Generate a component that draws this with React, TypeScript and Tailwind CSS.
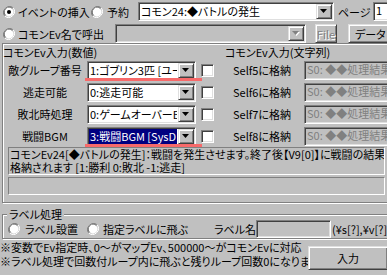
import React from "react";

const sunken =
  "border border-t-[#808080] border-l-[#808080] border-b-white border-r-white shadow-[inset_1px_1px_0_#404040,inset_-1px_-1px_0_#dfdfdf]";
const raised =
  "border border-t-[#dfdfdf] border-l-[#dfdfdf] border-b-[#404040] border-r-[#404040] shadow-[inset_1px_1px_0_#ffffff,inset_-1px_-1px_0_#808080]";
const thin = "border border-t-[#808080] border-l-[#808080] border-b-white border-r-white";

function Arrow({ off }: { off?: boolean }) {
  return (
    <div className={`flex h-full w-[16px] shrink-0 items-center justify-center bg-[#c0c0c0] ${raised}`}>
      <svg width="8" height="5" viewBox="0 0 8 5">
        {off && <polygon points="1,1 8,1 4.5,5" fill="#fff" />}
        <polygon points="0,0 7,0 3.5,4" fill={off ? "#808080" : "#000"} />
      </svg>
    </div>
  );
}

function Combo({
  text,
  className = "",
  off,
  sel,
}: {
  text?: string;
  className?: string;
  off?: boolean;
  sel?: boolean;
}) {
  return (
    <div className={`flex h-[19px] shrink-0 p-px ${sunken} ${off ? "bg-[#c0c0c0]" : "bg-white"} ${className}`}>
      <div
        className={`mr-px flex-1 overflow-hidden whitespace-nowrap pl-[1px] leading-[15px] ${
          sel ? "bg-[#000080] text-white" : ""
        }`}
      >
        {text}
      </div>
      <Arrow off={off} />
    </div>
  );
}

function Radio({ on, className = "" }: { on?: boolean; className?: string }) {
  return (
    <svg width="12" height="12" viewBox="0 0 12 12" className={`shrink-0 ${className}`}>
      <path d="M10.2 1.8A6 6 0 0 0 1.8 10.2" fill="none" stroke="#808080" strokeWidth="1" />
      <path d="M1.8 10.2A6 6 0 0 0 10.2 1.8" fill="none" stroke="#ffffff" strokeWidth="1" />
      <path d="M9.5 2.5A5 5 0 0 0 2.5 9.5" fill="none" stroke="#404040" strokeWidth="1" />
      <path d="M2.5 9.5A5 5 0 0 0 9.5 2.5" fill="none" stroke="#dfdfdf" strokeWidth="1" />
      <circle cx="6" cy="6" r="4.4" fill="#fff" />
      {on && <circle cx="6" cy="6" r="2" fill="#000" />}
    </svg>
  );
}

function Check({ className = "" }: { className?: string }) {
  return <div className={`h-[13px] w-[13px] shrink-0 bg-white ${sunken} ${className}`} />;
}

const rows = [
  { label: "敵グループ番号", value: "1:ゴブリン3匹 [ユーサ", self: "Self5に格納", mark: true },
  { label: "逃走可能", value: "0:逃走可能", self: "Self6に格納" },
  { label: "敗北時処理", value: "0:ゲームオーバーEv", self: "Self7に格納" },
  { label: "戦闘BGM", value: "3:戦闘BGM [SysD", self: "Self8に格納", sel: true, mark: true },
];

export default function App() {
  return (
    <div className="h-[275px] w-[387px] overflow-hidden bg-[#c0c0c0] text-[11px] leading-[14px] text-black font-['Noto_Sans_CJK_JP',sans-serif] [font-feature-settings:'palt']">
      {/* 上段 */}
      <div className="mt-[2px] flex h-[19px] items-center">
        <Radio on className="ml-[3px]" />
        <span className="ml-[3px] w-[72px] shrink-0 whitespace-nowrap">イベントの挿入</span>
        <Radio className="ml-[1px]" />
        <span className="ml-[4px] w-[31px] shrink-0">予約</span>
        <Combo className="w-[196px]" text="コモン24:◆バトルの発生" />
        <span className="ml-[4px] w-[35px] shrink-0 whitespace-nowrap">ページ</span>
        <div className={`h-[19px] w-[30px] shrink-0 bg-white pl-[2px] leading-[15px] ${sunken}`}>1</div>
      </div>
      <div className="mt-[3px] flex h-[19px] items-center">
        <Radio className="ml-[3px]" />
        <span className="ml-[3px] w-[80px] shrink-0 whitespace-nowrap">コモンEv名で呼出</span>
        <Combo off className="ml-[17px] w-[191px]" />
        <div
          className={`ml-[9px] flex h-[19px] w-[22px] shrink-0 items-center justify-center bg-[#c0c0c0] text-[#808080] [text-shadow:1px_1px_0_#fff] ${raised}`}
        >
          File
        </div>
        <div className={`ml-[11px] flex h-[19px] w-[50px] shrink-0 items-center pl-[6px] bg-[#c0c0c0] ${raised}`}>
          データ
        </div>
      </div>

      {/* コモンEv入力 */}
      <div className="ml-[2px] w-[400px] border border-[#808080] pb-[7px] shadow-[inset_1px_1px_0_#fff,1px_1px_0_#fff]">
        <div className="flex h-[15px] items-center whitespace-nowrap">
          <span className="w-[222px] shrink-0">コモンEv入力(数値)</span>
          <span>コモンEv入力(文字列)</span>
        </div>
        {rows.map((r) => (
          <div key={r.label} className="flex h-[22px] items-center whitespace-nowrap">
            <div className="w-[84px] shrink-0 text-center">{r.label}</div>
            <div className="relative">
              <Combo className="w-[109px]" text={r.value} sel={r.sel} />
              {r.mark && (
                <div className="absolute left-[-2px] top-[17px] h-[3px] w-[117px] bg-[#f76a6a]" />
              )}
            </div>
            <Check className="ml-[5px]" />
            <div className="ml-[19px] w-[58px] shrink-0">{r.self}</div>
            <div
              className={`ml-[13px] h-[19px] w-[100px] shrink-0 pl-[2px] leading-[15px] text-[#808080] ${sunken}`}
            >
              S0: ◆◆処理結果
            </div>
          </div>
        ))}
        <div className={`ml-[5px] h-[28px] w-[377px] overflow-hidden whitespace-nowrap pl-px leading-[13px] ${thin}`}>
          <div>コモンEv24[◆バトルの発生]：戦闘を発生させます。終了後【V9[0]】に戦闘の結果が</div>
          <div>格納されます [1:勝利 0:敗北 -1:逃走]</div>
        </div>
        <div className={`ml-[5px] mt-[2px] h-[18px] w-[377px] ${thin}`} />
      </div>

      {/* ラベル処理 */}
      <fieldset className="ml-[2px] mt-[4px] w-[400px] border border-[#808080] shadow-[inset_1px_1px_0_#fff,1px_1px_0_#fff]">
        <legend className="ml-[4px] bg-[#c0c0c0] px-[2px] leading-[14px]">ラベル処理</legend>
        <div className="-mt-[1px] flex h-[18px] items-center whitespace-nowrap">
          <Radio className="ml-[5px]" />
          <span className="ml-[5px] w-[62px] shrink-0">ラベル設置</span>
          <Radio />
          <span className="ml-[4px] w-[111px] shrink-0">指定ラベルに飛ぶ</span>
          <span className="w-[42px] shrink-0">ラベル名</span>
          <div className={`h-[18px] w-[75px] shrink-0 ${sunken}`} />
          <span className="ml-[1px]">(¥s[?],¥v[?]可</span>
        </div>
      </fieldset>

      {/* 注意書き */}
      <div className="flex whitespace-nowrap">
        <div className="mt-[1px] w-[308px] shrink-0">
          <div>※変数でEv指定時、0～がマップEv、500000～がコモンEvに対応</div>
          <div>※ラベル処理で回数付ループ内に飛ぶと残りループ回数0になります</div>
        </div>
        <div className={`relative mt-[7px] flex h-[24px] w-[80px] shrink-0 items-center justify-center bg-[#c0c0c0] ${raised}`}>
          入力
        </div>
      </div>
    </div>
  );
}
